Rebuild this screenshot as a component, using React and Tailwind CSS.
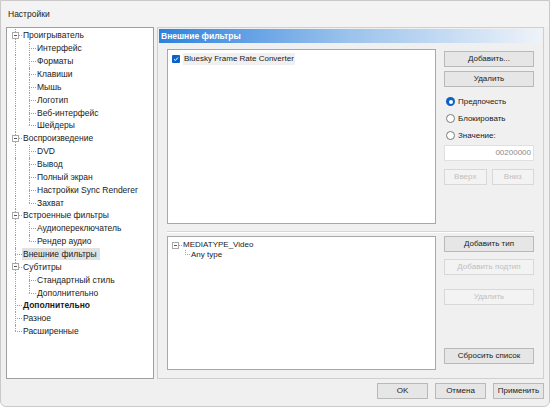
import React from "react";

const tree = [
  { label: "Проигрыватель", level: 0, box: true },
  { label: "Интерфейс", level: 1 },
  { label: "Форматы", level: 1 },
  { label: "Клавиши", level: 1 },
  { label: "Мышь", level: 1 },
  { label: "Логотип", level: 1 },
  { label: "Веб-интерфейс", level: 1 },
  { label: "Шейдеры", level: 1, last: true },
  { label: "Воспроизведение", level: 0, box: true },
  { label: "DVD", level: 1 },
  { label: "Вывод", level: 1 },
  { label: "Полный экран", level: 1 },
  { label: "Настройки Sync Renderer", level: 1 },
  { label: "Захват", level: 1, last: true },
  { label: "Встроенные фильтры", level: 0, box: true },
  { label: "Аудиопереключатель", level: 1 },
  { label: "Рендер аудио", level: 1, last: true },
  { label: "Внешние фильтры", level: 0, selected: true },
  { label: "Субтитры", level: 0, box: true },
  { label: "Стандартный стиль", level: 1 },
  { label: "Дополнительно", level: 1, last: true },
  { label: "Дополнительно", level: 0, bold: true },
  { label: "Разное", level: 0 },
  { label: "Расширенные", level: 0, rootLast: true },
];

function Cell({ vert, horiz, box }) {
  return (
    <div className="relative w-[10px] h-full shrink-0">
      {vert !== "none" && (
        <div
          className={
            "absolute left-[5px] top-0 border-l border-dotted border-[#a0a0a0] " +
            (vert === "top" ? "h-1/2" : "h-full")
          }
        />
      )}
      {horiz && (
        <div className="absolute left-[5px] top-1/2 w-[7px] border-t border-dotted border-[#a0a0a0]" />
      )}
      {box && (
        <div className="absolute left-[2px] top-[3px] w-[7px] h-[7px] border border-[#a8a8a8] bg-white flex items-center justify-center">
          <div className="w-[3px] border-t border-[#555]" />
        </div>
      )}
    </div>
  );
}

function TreeRow({ item }) {
  const text = (
    <span
      className={
        "px-[1px] whitespace-nowrap leading-[12px] " +
        (item.selected ? "bg-[#e1e1e1] pr-[3px] " : "") +
        (item.bold ? "font-bold" : "")
      }
    >
      {item.label}
    </span>
  );
  if (item.level === 0) {
    return (
      <div className="flex items-center h-[12.87px]">
        <Cell vert={item.rootLast ? "top" : "full"} horiz box={item.box} />
        <div className="w-[2px]" />
        {text}
      </div>
    );
  }
  return (
    <div className="flex items-center h-[12.87px]">
      <Cell vert="full" />
      <div className="w-[4px]" />
      <Cell vert={item.last ? "top" : "full"} horiz />
      <div className="w-[2px]" />
      {text}
    </div>
  );
}

function Btn({ children, disabled, className = "" }) {
  return (
    <div
      className={
        "h-[16px] flex items-center justify-center border text-[8px] " +
        (disabled
          ? "border-[#d8d8d8] bg-[#f3f3f3] text-[#c0c0c0] "
          : "border-[#b9b9b9] bg-[#e6e6e6] text-[#222] ") +
        className
      }
    >
      {children}
    </div>
  );
}

function Radio({ checked, label }) {
  return (
    <div className="flex items-center gap-[3px] h-[13px] text-[8px]">
      {checked ? (
        <div className="w-[9px] h-[9px] rounded-full bg-[#0a62c4] flex items-center justify-center">
          <div className="w-[4px] h-[4px] rounded-full bg-white" />
        </div>
      ) : (
        <div className="w-[9px] h-[9px] rounded-full border border-[#7a7a7a] bg-white" />
      )}
      <span>{label}</span>
    </div>
  );
}

export default function App() {
  return (
    <div
      className="w-[550px] h-[407px] bg-[#f0f0f0] border border-[#c9c9c9] rounded-b-[6px] text-[#1a1a1a] flex flex-col overflow-hidden"
      style={{ fontFamily: '"Liberation Sans", Arial, sans-serif' }}
    >
      <div className="h-[26px] shrink-0 bg-[#f3f3f3] flex items-center px-[7px] text-[8.5px]">
        Настройки
      </div>
      <div className="flex px-[5px] gap-[3px] h-[352px] shrink-0">
        <div className="w-[149px] border border-[#9f9f9f] bg-white pt-[1px] pl-[3px] text-[8.5px]">
          {tree.map((item, i) => (
            <TreeRow key={i} item={item} />
          ))}
        </div>
        <div className="flex-1 border border-[#cfcfcf] p-[1px] flex flex-col">
          <div className="h-[14px] shrink-0 bg-gradient-to-r from-[#2a82dc] via-[#9cc3ec] to-[#eef3f9] text-white font-bold text-[8.5px] flex items-center px-[2px]">
            Внешние фильтры
          </div>
          <div className="flex-1 flex flex-col pl-[8px] pr-[8px] pt-[6px]">
            <div className="flex gap-[8px]">
              <div className="w-[269px] h-[175px] border border-[#a8a8a8] bg-white p-[3px]">
                <div className="flex items-center gap-[3px] h-[11px]">
                  <div className="w-[8px] h-[8px] ml-[1px] rounded-[1px] bg-[#0a62c4] flex items-center justify-center">
                    <svg width="6" height="6" viewBox="0 0 6 6">
                      <path d="M1 3.2 L2.4 4.5 L5 1.5" stroke="white" strokeWidth="1" fill="none" />
                    </svg>
                  </div>
                  <span className="text-[8px] bg-[#f0f0f0] px-[1px]">Bluesky Frame Rate Converter</span>
                </div>
              </div>
              <div className="w-[90px] flex flex-col pt-[2px]">
                <Btn>Добавить...</Btn>
                <Btn className="mt-[4px]">Удалить</Btn>
                <div className="mt-[8px] flex flex-col gap-[4px] pl-[2px]">
                  <Radio checked label="Предпочесть" />
                  <Radio label="Блокировать" />
                  <Radio label="Значение:" />
                </div>
                <div className="mt-[3px] h-[16px] border border-[#e0e0e0] bg-white text-[#8a8a8a] text-[8px] flex items-center justify-end pr-[2px]">
                  00200000
                </div>
                <div className="mt-[8px] flex gap-[5px]">
                  <Btn disabled className="flex-1">Вверх</Btn>
                  <Btn disabled className="flex-1">Вниз</Btn>
                </div>
              </div>
            </div>
            <div className="mt-[7px] border-t border-[#d6d6d6] border-b border-b-white" />
            <div className="flex gap-[8px] mt-[3px]">
              <div className="w-[269px] h-[134px] border border-[#a8a8a8] bg-white pt-[3px] pl-[4px] text-[8px]">
                <div className="flex items-center h-[10px]">
                  <div className="w-[7px] h-[7px] border border-[#a8a8a8] flex items-center justify-center">
                    <div className="w-[3px] border-t border-[#555]" />
                  </div>
                  <div className="w-[3px] border-t border-dotted border-[#a0a0a0]" />
                  <span className="ml-[1px]">MEDIATYPE_Video</span>
                </div>
                <div className="flex items-start h-[10px] pl-[13px]">
                  <div className="w-[5px] h-[5px] border-l border-b border-dotted border-[#a0a0a0]" />
                  <span className="ml-[1px] -mt-[1px]">Any type</span>
                </div>
              </div>
              <div className="w-[90px] flex flex-col">
                <Btn>Добавить тип</Btn>
                <Btn disabled className="mt-[7px]">Добавить подтип</Btn>
                <Btn disabled className="mt-[14px]">Удалить</Btn>
                <Btn className="mt-[43px]">Сбросить список</Btn>
              </div>
            </div>
          </div>
        </div>
      </div>
      <div className="flex justify-end gap-[7px] pt-[4px] pr-[5px]">
        <Btn className="w-[51px]">OK</Btn>
        <Btn className="w-[51px]">Отмена</Btn>
        <Btn className="w-[51px]">Применить</Btn>
      </div>
    </div>
  );
}
